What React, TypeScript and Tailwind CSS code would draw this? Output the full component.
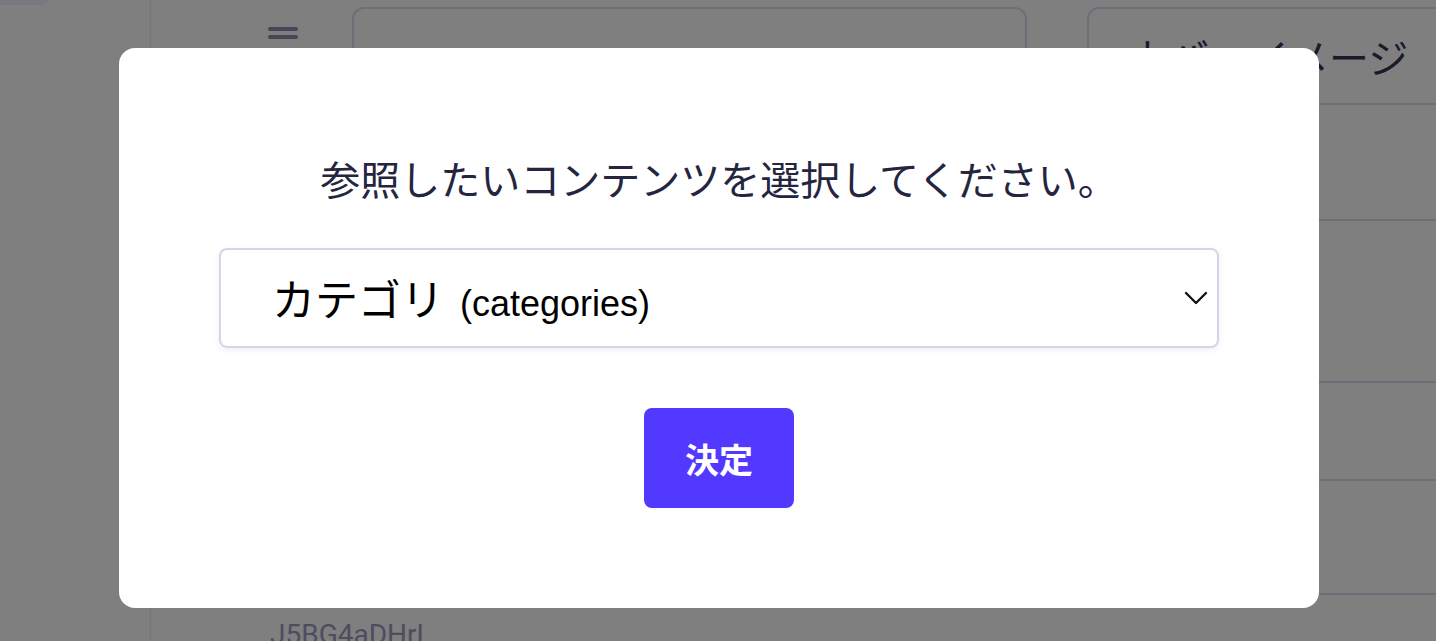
import { ChevronDown } from 'lucide-react';

const jp = { fontFamily: '"Noto Sans CJK JP", "Noto Sans", sans-serif' };
const latin = { fontFamily: '"Liberation Sans", "Noto Sans CJK JP", sans-serif' };

export default function App() {
  return (
    <div className="relative h-[641px] w-[1436px] overflow-hidden bg-white" style={jp}>
      {/* Page behind the dialog */}
      <div className="flex h-full">
        <aside className="w-[151px] shrink-0 border-r border-[#ececf2]">
          <div className="h-[5px] w-[48px] rounded-br-lg bg-[#f2eeff]" />
        </aside>

        <main className="flex min-w-0 flex-1 flex-col">
          <div className="flex h-[105px] items-start pl-[117px]">
            <div className="mt-[27px] flex w-[30px] flex-col gap-[4px]">
              <span className="h-[4px] rounded-sm bg-[#8c8cac]" />
              <span className="h-[4px] rounded-sm bg-[#8c8cac]" />
            </div>
            <div className="ml-[54px] mt-[7px] h-[90px] w-[675px] shrink-0 rounded-xl border-2 border-[#dcdcf0]" />
            <div className="ml-[60px] mt-[7px] flex h-[98px] min-w-0 flex-1 items-center overflow-hidden rounded-tl-xl border-2 border-r-0 border-[#dcdcf0] pl-[40px]">
              <span className="whitespace-nowrap text-[40px] leading-none text-[#343452]">カバーイメージ</span>
            </div>
          </div>

          <div className="h-[116px] shrink-0 border-b-2 border-[#dcdcf0]" />
          <div className="h-[162px] shrink-0 border-b-2 border-[#dcdcf0]" />
          <div className="h-[98px] shrink-0 border-b-2 border-[#dcdcf0]" />
          <div className="h-[114px] shrink-0 border-b-2 border-[#dcdcf0]" />
          <div className="pl-[119px] pt-[26px] text-[28px] leading-none text-[#9a9abc]" style={{ fontFamily: 'Roboto, sans-serif' }}>
            J5BG4aDHrL
          </div>
        </main>
      </div>

      {/* Dialog */}
      <div className="absolute inset-0 flex items-start justify-center bg-black/50">
        <div className="ml-[2px] mt-[48px] flex w-[1200px] flex-col items-center rounded-2xl bg-white px-[100px] py-[100px]">
          <h2 className="text-[40px] leading-[1.5] text-[#25253f]">参照したいコンテンツを選択してください。</h2>

          <div className="mt-[40px] flex h-[100px] w-full items-center justify-between rounded-lg border-2 border-[#d4d4ea] pl-[51px] pr-[1px] shadow-[0_2px_6px_rgba(60,60,120,0.08)]">
            <span className="text-black">
              <span className="text-[43px]">カテゴリ</span>
              <span className="pl-[16px] text-[36px]" style={latin}>(categories)</span>
            </span>
            <ChevronDown size={40} strokeWidth={1.4} className="text-[#111]" />
          </div>

          <button className="mt-[60px] h-[100px] w-[150px] rounded-lg bg-[#5339ff] text-[34px] font-bold text-white">
            決定
          </button>
        </div>
      </div>
    </div>
  );
}
